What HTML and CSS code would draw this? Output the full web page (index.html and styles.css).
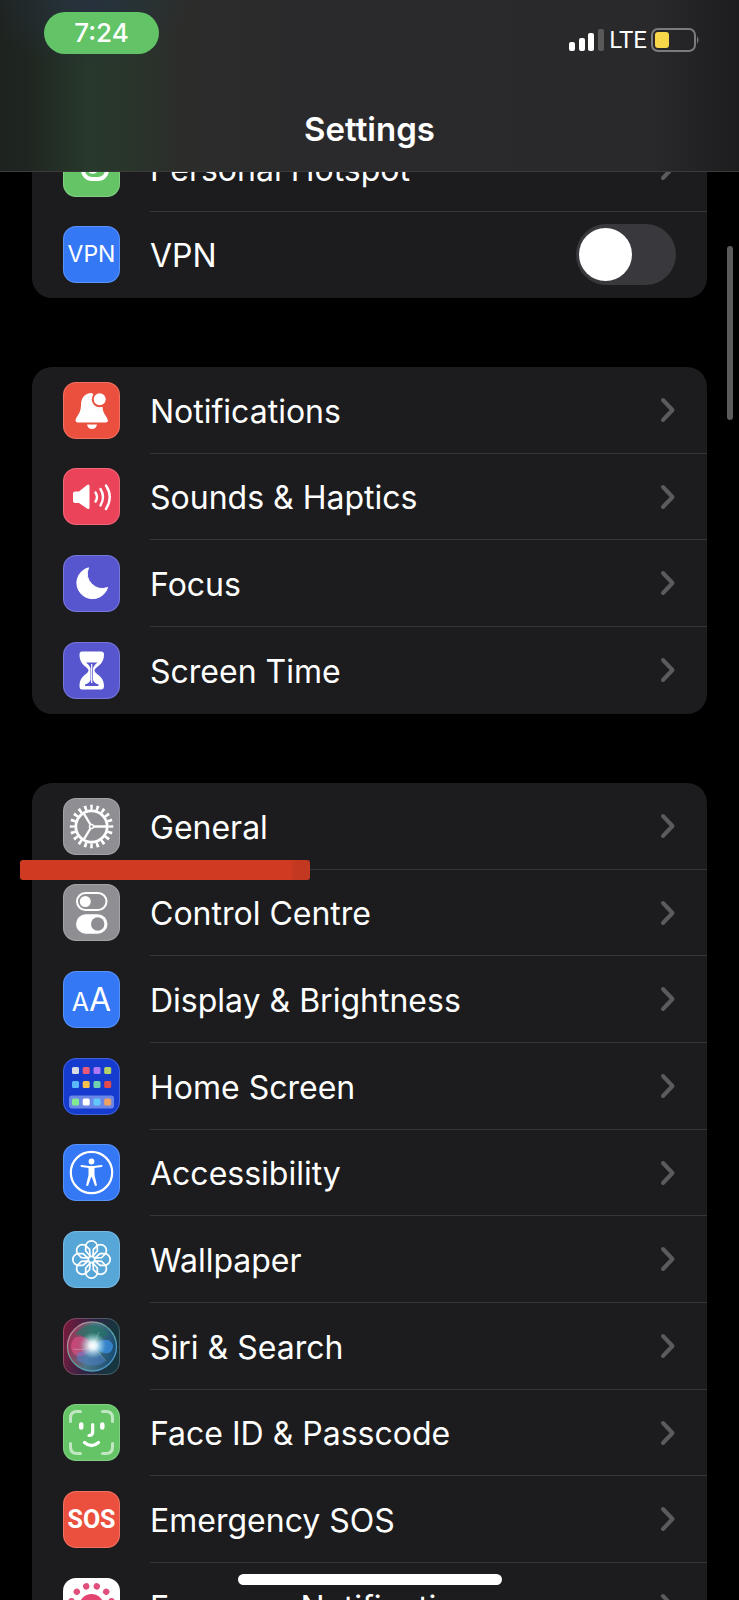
FILE: index.html
```html
<!DOCTYPE html>
<html lang="en-GB">
<head>
<meta charset="utf-8">
<meta name="viewport" content="width=device-width, initial-scale=1">
<title>Settings</title>
<link rel="stylesheet" href="styles.css">
</head>
<body>
<svg class="defs" width="0" height="0" aria-hidden="true">
  <symbol id="chevron" viewBox="0 0 16 26"><path d="M3 3 L12.500 13 L3 23" fill="none" stroke="#5b5b5f" stroke-width="4" stroke-linecap="round" stroke-linejoin="round"/></symbol>
</svg>

<header class="topbar">
  <div class="status">
    <span class="clock">7:24</span>
    <div class="signals">
      <svg width="36" height="24" viewBox="0 0 36 24" aria-hidden="true">
        <g fill="#fff"><rect x="0" y="14" width="6" height="9" rx="2"/><rect x="10" y="10" width="6" height="13" rx="2"/><rect x="19" y="5" width="6" height="18" rx="2"/></g>
        <rect x="29" y="1" width="6" height="22" rx="2" fill="#59595a"/>
      </svg>
      <span class="network">LTE</span>
      <svg width="49" height="24" viewBox="0 0 49 24" aria-hidden="true">
        <rect x="1" y="1" width="43" height="22" rx="6" fill="none" stroke="#7b7b7c" stroke-width="2"/>
        <path d="M46 8 Q49 12 46 16Z" fill="#7b7b7c"/>
        <rect x="4" y="4" width="14" height="16" rx="3" fill="#f8d74a"/>
      </svg>
    </div>
  </div>
  <h1 class="title">Settings</h1>
</header>

<main class="content">
  <ul class="group">
    <li class="row"><a class="item" href="#hotspot">
      <svg class="icon green" viewBox="0 0 57 57" aria-hidden="true"><g fill="none" stroke="#fff" stroke-width="4"><rect x="20" y="18" width="24" height="21" rx="9"/><rect x="12" y="9" width="24" height="21" rx="9"/><path d="M27 30 Q28 33 33 31"/></g></svg>
      <span class="label">Personal Hotspot</span><svg class="chevron" aria-hidden="true"><use href="#chevron"/></svg></a></li>
    <li class="row"><label class="item">
      <span class="icon blue vpn" aria-hidden="true">VPN</span>
      <span class="label">VPN</span><input class="switch" type="checkbox" role="switch"></label></li>
  </ul>

  <ul class="group">
    <li class="row"><a class="item" href="#notifications">
      <svg class="icon red" viewBox="0 0 57 57" aria-hidden="true"><path fill="#fff" d="M29 11 C21 11 18 17 18 23 C18 32 13 34 12.500 38.500 Q12.500 40.500 15 40.500 H42.500 Q45 40.500 45 38.500 C44 34 39.500 32 39.500 24 Z"/><circle cx="36.700" cy="17.300" r="7" fill="#fff" stroke="#eb4f3d" stroke-width="2"/><path fill="#fff" d="M24 42.500 H34 Q33 47 29 47 Q25 47 24 42.500Z"/></svg>
      <span class="label">Notifications</span><svg class="chevron" aria-hidden="true"><use href="#chevron"/></svg></a></li>
    <li class="row"><a class="item" href="#sounds">
      <svg class="icon pink" viewBox="0 0 57 57" aria-hidden="true"><path d="M12 23.500 H16 L24 17 Q26.500 15.500 26.500 18 V39.500 Q26.500 42 24 40.500 L16 35 H12 Q10 35 10 33 V25.500 Q10 23.500 12 23.500Z" fill="#fff"/><path d="M32.500 24.500 Q35.500 29 32.500 33.500 M37.500 21 Q42.500 29 37.500 37.500 M43 17.500 Q50.500 29 43 41" fill="none" stroke="#fff" stroke-width="2.400" stroke-linecap="round"/></svg>
      <span class="label">Sounds &amp; Haptics</span><svg class="chevron" aria-hidden="true"><use href="#chevron"/></svg></a></li>
    <li class="row"><a class="item" href="#focus">
      <svg class="icon indigo" viewBox="0 0 57 57" aria-hidden="true"><path d="M25.500 12.800 A15.700 15.700 0 1 0 44.600 32.500 A15 15 0 0 1 25.500 12.800Z" fill="#fff" stroke="#fff" stroke-linejoin="round"/></svg>
      <span class="label">Focus</span><svg class="chevron" aria-hidden="true"><use href="#chevron"/></svg></a></li>
    <li class="row"><a class="item" href="#screen-time">
      <svg class="icon indigo" viewBox="0 0 57 57" aria-hidden="true"><path d="M19 9.500 H38 Q41 9.500 41 12.500 C41 21 36 23 32 27 Q31 28.500 32 30 C36 34 41 36 41 44 Q41 47.500 38 47.500 H19 Q16.500 47.500 16.500 44 C16.500 36 21 34 25 30 Q26 28.500 25 27 C21 23 16.500 21 16.500 12.500 Q16.500 9.500 19 9.500Z" fill="#fff"/><path d="M23 20.500 H34.500 Q31 23 30 26 V38 Q31 41 35.500 42.500 V44 H22 V42.500 Q26.500 41 27.500 38 V26 Q26.500 23 23 20.500Z" fill="#5856ce"/><path d="M28.700 22 V41" stroke="#fff" stroke-width="1.200"/></svg>
      <span class="label">Screen Time</span><svg class="chevron" aria-hidden="true"><use href="#chevron"/></svg></a></li>
  </ul>

  <ul class="group">
    <li class="row marked"><a class="item" href="#general">
      <svg class="icon grey" viewBox="0 0 57 57" aria-hidden="true"><g fill="none" stroke="#fff"><circle cx="28.500" cy="28.500" r="15.700" stroke-width="2.800"/><circle cx="28.500" cy="28.500" r="19.200" stroke-width="5" pathLength="80" stroke-dasharray="1.700 2.300" stroke-dashoffset="0.850"/><circle cx="28.500" cy="28.500" r="2" stroke-width="1.500"/><path d="M30.500 28.500 H43 M27.400 26.500 L20.500 15 M27.400 30.500 L20.500 42" stroke-width="2.400"/></g></svg>
      <span class="label">General</span><svg class="chevron" aria-hidden="true"><use href="#chevron"/></svg></a></li>
    <li class="row"><a class="item" href="#control-centre">
      <svg class="icon grey" viewBox="0 0 57 57" aria-hidden="true"><rect x="14" y="9" width="29.500" height="17" rx="8.500" fill="none" stroke="#fff" stroke-width="2"/><circle cx="22.300" cy="17.500" r="5.500" fill="#fff"/><rect x="13" y="30.300" width="31.500" height="19.400" rx="9.700" fill="#fff"/><circle cx="34.700" cy="40" r="6.700" fill="#8e8e93"/></svg>
      <span class="label">Control Centre</span><svg class="chevron" aria-hidden="true"><use href="#chevron"/></svg></a></li>
    <li class="row"><a class="item" href="#display">
      <span class="icon blue letters" aria-hidden="true"><span class="small-a">A</span><span class="large-a">A</span></span>
      <span class="label">Display &amp; Brightness</span><svg class="chevron" aria-hidden="true"><use href="#chevron"/></svg></a></li>
    <li class="row"><a class="item" href="#home-screen">
      <svg class="icon royal" viewBox="0 0 57 57" aria-hidden="true"><rect x="6" y="37.500" width="45" height="13" rx="3" fill="#6a86e6"/>
        <rect x="9" y="9" width="7" height="7" rx="1.500" fill="#d9dae3"/><rect x="19.700" y="9" width="7" height="7" rx="1.500" fill="#e85a78"/><rect x="30.500" y="9" width="7" height="7" rx="1.500" fill="#ac78f8"/><rect x="41.200" y="9" width="7" height="7" rx="1.500" fill="#b4d268"/>
        <rect x="9" y="23" width="7" height="7" rx="1.500" fill="#58b8fa"/><rect x="19.700" y="23" width="7" height="7" rx="1.500" fill="#f7c14b"/><rect x="30.500" y="23" width="7" height="7" rx="1.500" fill="#6ed3ae"/><rect x="41.200" y="23" width="7" height="7" rx="1.500" fill="#e24a4b"/>
        <rect x="9" y="40.500" width="7" height="7" rx="1.500" fill="#82e992"/><rect x="19.700" y="40.500" width="7" height="7" rx="1.500" fill="#fff"/><rect x="30.500" y="40.500" width="7" height="7" rx="1.500" fill="#62c7fa"/><rect x="41.200" y="40.500" width="7" height="7" rx="1.500" fill="#eda163"/></svg>
      <span class="label">Home Screen</span><svg class="chevron" aria-hidden="true"><use href="#chevron"/></svg></a></li>
    <li class="row"><a class="item" href="#accessibility">
      <svg class="icon blue" viewBox="0 0 57 57" aria-hidden="true"><circle cx="28.500" cy="28.500" r="20.700" fill="none" stroke="#fff" stroke-width="2.200"/><circle cx="28.500" cy="17.500" r="2.900" fill="#fff"/><path d="M18.500 22 L26 23 H31 L38.500 22 M28.500 23 V31" fill="none" stroke="#fff" stroke-width="2" stroke-linecap="round"/><path d="M25.500 22.500 H31.500 V31 L34 41.500 L32 42 L28.800 33 H28.200 L25 42 L23 41.500 L25.500 31Z" fill="#fff"/></svg>
      <span class="label">Accessibility</span><svg class="chevron" aria-hidden="true"><use href="#chevron"/></svg></a></li>
    <li class="row"><a class="item" href="#wallpaper">
      <svg class="icon sky" viewBox="0 0 57 57" aria-hidden="true"><defs><path id="petal" d="M27.500 25.500 L22.700 20 V15.600 A5.800 5.800 0 0 1 34.300 15.600 V20 L29.500 25.500"/></defs><g fill="none" stroke="#fff" stroke-width="1.700"><use href="#petal"/><use href="#petal" transform="rotate(45 28.500 28.500)"/><use href="#petal" transform="rotate(90 28.500 28.500)"/><use href="#petal" transform="rotate(135 28.500 28.500)"/><use href="#petal" transform="rotate(180 28.500 28.500)"/><use href="#petal" transform="rotate(225 28.500 28.500)"/><use href="#petal" transform="rotate(270 28.500 28.500)"/><use href="#petal" transform="rotate(315 28.500 28.500)"/><circle cx="28.500" cy="28.500" r="3.200"/></g></svg>
      <span class="label">Wallpaper</span><svg class="chevron" aria-hidden="true"><use href="#chevron"/></svg></a></li>
    <li class="row"><a class="item" href="#siri">
      <svg class="icon siri" viewBox="0 0 57 57" aria-hidden="true"><defs>
        <radialGradient id="glow"><stop offset="0" stop-color="#fff"/><stop offset=".3" stop-color="#eefcff" stop-opacity=".9"/><stop offset="1" stop-color="#9fe8e8" stop-opacity="0"/></radialGradient>
        <linearGradient id="orb" x1="0" y1=".4" x2="1" y2=".6"><stop offset="0" stop-color="#a52c55"/><stop offset=".45" stop-color="#4b7683"/><stop offset="1" stop-color="#174a72"/></linearGradient>
        <linearGradient id="rim" x1="0" y1="0" x2="1" y2="1"><stop offset="0" stop-color="#e07b92"/><stop offset=".45" stop-color="#5ba596"/><stop offset="1" stop-color="#4a92d8"/></linearGradient></defs>
        <circle cx="29" cy="28.500" r="24.500" fill="url(#orb)" stroke="url(#rim)" stroke-width="1.300"/>
        <path d="M12 16 Q28 -2 46 16 Q36 20 31 28 Q24 17 12 16Z" fill="#1f7461" opacity=".6"/>
        <path d="M31 28 C22 15 9 16 8 28 C8 41 23 42 31 28Z" fill="#ec4b86" opacity=".6"/><path d="M31 28 C38 20 47 20 50 27 C50 38 39 38 31 28Z" fill="#3a8de0" opacity=".8"/>
        <path d="M14 35 Q26 31 32 29 Q42 42 42 44 Q28 52 14 42Z" fill="#5384dc" opacity=".45"/>
        <g stroke="#c9edf5" stroke-width=".8" opacity=".4" fill="none"><path d="M30 28 L43 43 M30 28 L36 14 M29 28 Q21 33 10 31"/></g>
        <circle cx="30" cy="27.500" r="13" fill="url(#glow)"/></svg>
      <span class="label">Siri &amp; Search</span><svg class="chevron" aria-hidden="true"><use href="#chevron"/></svg></a></li>
    <li class="row"><a class="item" href="#face-id">
      <svg class="icon green" viewBox="0 0 57 57" aria-hidden="true"><g fill="none" stroke="#fff" stroke-linecap="round"><path opacity=".6" stroke-width="3" d="M17.500 7.500 H14 Q7.500 7.500 7.500 14 V17.500 M39.500 7.500 H43 Q49.500 7.500 49.500 14 V17.500 M7.500 39.500 V43 Q7.500 49.500 14 49.500 H17.500 M49.500 39.500 V43 Q49.500 49.500 43 49.500 H39.500"/><path stroke-width="4.500" d="M18.200 20.500 V23.500 M39.300 20.500 V23.500"/><path stroke-width="3.200" d="M29.700 20.500 V28 Q29.700 31.500 26 31.500 M21.500 38.500 Q28.500 44.500 35.500 38.500"/></g></svg>
      <span class="label">Face ID &amp; Passcode</span><svg class="chevron" aria-hidden="true"><use href="#chevron"/></svg></a></li>
    <li class="row"><a class="item" href="#sos">
      <span class="icon red sos" aria-hidden="true">SOS</span>
      <span class="label">Emergency SOS</span><svg class="chevron" aria-hidden="true"><use href="#chevron"/></svg></a></li>
    <li class="row"><a class="item" href="#exposure">
      <svg class="icon white" viewBox="0 0 57 57" aria-hidden="true"><g fill="#e34470"><circle cx="28.500" cy="28.500" r="12.500"/><circle cx="28.500" cy="28.500" r="20.800" fill="none" stroke="#e0507c" stroke-width="6.400" stroke-linecap="round" pathLength="120" stroke-dasharray="0.010 9.990" stroke-dashoffset="-5"/></g></svg>
      <span class="label">Exposure Notifications</span><svg class="chevron" aria-hidden="true"><use href="#chevron"/></svg></a></li>
  </ul>
</main>

<div class="scrollbar"></div>
<div class="home-indicator"></div>
</body>
</html>
```

FILE: styles.css
```css
* { box-sizing: border-box; }

body {
  margin: 0;
  height: 100vh;
  overflow: hidden;
  background: #000;
  color: #fff;
  font-family: Inter, Roboto, "Liberation Sans", sans-serif;
}

.defs { position: absolute; }

.topbar {
  position: fixed;
  inset: 0 0 auto;
  z-index: 1;
  height: 172px;
  border-bottom: 1px solid #3b3b3c;
  background:
    linear-gradient(90deg, transparent 88%, #1d1d1f 100%),
    radial-gradient(100px 70px at 90px 0, rgba(38, 48, 64, 0.9), transparent),
    linear-gradient(90deg, #1e2320 0, #1f2621 28px, #28382b 88px, #29352b 130px, #2c2d2b 180px, #2a2a2c 300px, #29292b 100%);
}

.status {
  display: flex;
  justify-content: space-between;
  align-items: flex-start;
  padding: 12px 39px 0 44px;
}

.clock {
  width: 115px;
  border-radius: 21px;
  background: #62c466;
  font-size: 26px;
  font-weight: 500;
  line-height: 42px;
  text-align: center;
}

.signals {
  display: flex;
  align-items: center;
  gap: 4px;
  padding-top: 16px;
}

.network {
  font-family: Roboto, sans-serif;
  font-size: 24px;
  line-height: 24px;
}

.title {
  margin: 54px 0 0;
  font-size: 33px;
  font-weight: 600;
  line-height: 42px;
  text-align: center;
}

.content {
  display: flex;
  flex-direction: column;
  gap: 69px;
  height: 100%;
  padding: 125px 32px 0;
  overflow: hidden;
}

.group {
  flex: none;
  margin: 0;
  padding: 0;
  border-radius: 20px;
  background: #1c1c1e;
  list-style: none;
}

.row {
  position: relative;
  height: 87px;
}

.row:nth-child(3n + 2) { height: 86px; }

.row + .row::before {
  content: "";
  position: absolute;
  inset: -1px 0 auto 118px;
  border-top: 1px solid #363638;
}

.item {
  display: flex;
  align-items: center;
  gap: 30px;
  height: 100%;
  padding: 0 31px 1px;
  color: inherit;
  text-decoration: none;
}

.label {
  flex: 1;
  padding-top: 3px;
  font-size: 32px;
  line-height: 40px;
  white-space: nowrap;
}

.chevron {
  width: 16px;
  height: 26px;
}

.icon {
  flex: none;
  width: 57px;
  height: 57px;
  border-radius: 13px;
  outline: 1px solid rgba(255, 255, 255, 0.2);
  outline-offset: -1px;
}

.green { background: #65c466; }
.blue { background: #3478f6; }
.red { background: #eb4f3d; }
.pink { background: #eb445a; }
.indigo { background: #5856ce; }
.grey { background: #8e8e93; }
.royal { background: #153cce; }
.sky { background: #57a6d8; }
.white { background: #fff; }
.siri { background: linear-gradient(100deg, #801a3c, #302445 45%, #17353f 80%); }

.vpn,
.sos {
  font-size: 23px;
  line-height: 57px;
  text-align: center;
}

.sos {
  font-family: Roboto, sans-serif;
  font-size: 25px;
  font-weight: 700;
}

.letters {
  display: flex;
  justify-content: center;
  align-items: baseline;
  line-height: 57px;
}

.small-a { font-size: 25px; }
.large-a { font-size: 32px; }

.switch {
  appearance: none;
  width: 100px;
  height: 61px;
  margin: 0;
  padding: 4px 3px;
  border-radius: 31px;
  background: #39393d;
}

.switch::before {
  content: "";
  display: block;
  width: 53px;
  height: 53px;
  border-radius: 50%;
  background: #fff;
}

.switch:checked { background: #65c466; }
.switch:checked::before { margin-left: auto; }

.marked::after {
  content: "";
  position: absolute;
  z-index: 1;
  top: 77px;
  left: -12px;
  width: 290px;
  height: 20px;
  border-radius: 3px;
  background: linear-gradient(90deg, #cf3a22 93%, #c23821 95%, #c23821);
}

.scrollbar {
  position: fixed;
  top: 246px;
  right: 6px;
  width: 6px;
  height: 174px;
  border-radius: 3px;
  background: #5b5b5b;
}

.home-indicator {
  position: fixed;
  bottom: 15px;
  left: 50%;
  width: 264px;
  height: 11px;
  margin-left: -132px;
  border-radius: 6px;
  background: #fff;
}
```
